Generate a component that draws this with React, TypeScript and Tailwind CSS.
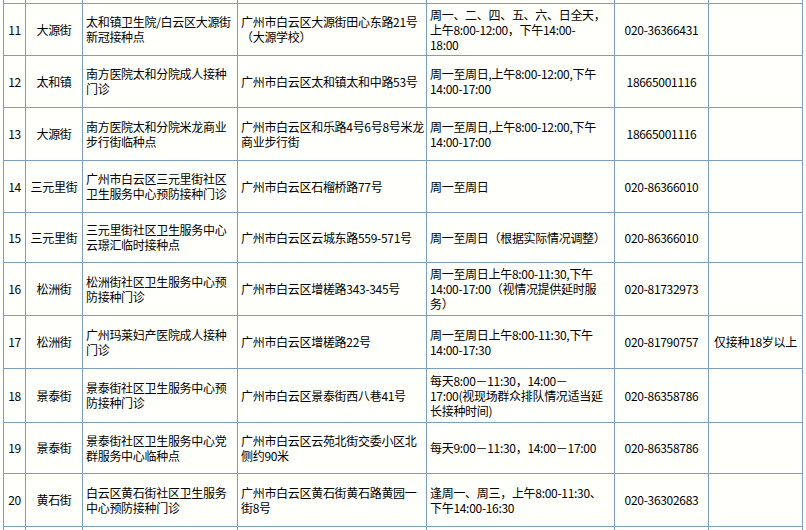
const rows: {
  no: string;
  street: string;
  name: string[];
  addr: string[];
  time: string[];
  phone: string;
  note?: string;
  h: string;
}[] = [
  {
    no: "11",
    street: "大源街",
    name: ["太和镇卫生院/白云区大源街", "新冠接种点"],
    addr: ["广州市白云区大源街田心东路21号", "（大源学校）"],
    time: ["周一、二、四、五、六、日全天，", "上午8:00-12:00，下午14:00-", "18:00"],
    phone: "020-36366431",
    h: "h-[52px]",
  },
  {
    no: "12",
    street: "太和镇",
    name: ["南方医院太和分院成人接种", "门诊"],
    addr: ["广州市白云区太和镇太和中路53号"],
    time: ["周一至周日,上午8:00-12:00,下午", "14:00-17:00"],
    phone: "18665001116",
    h: "h-[52px]",
  },
  {
    no: "13",
    street: "大源街",
    name: ["南方医院太和分院米龙商业", "步行街临种点"],
    addr: ["广州市白云区和乐路4号6号8号米龙", "商业步行街"],
    time: ["周一至周日,上午8:00-12:00,下午", "14:00-17:00"],
    phone: "18665001116",
    h: "h-[53px]",
  },
  {
    no: "14",
    street: "三元里街",
    name: ["广州市白云区三元里街社区", "卫生服务中心预防接种门诊"],
    addr: ["广州市白云区石榴桥路77号"],
    time: ["周一至周日"],
    phone: "020-86366010",
    h: "h-[52px]",
  },
  {
    no: "15",
    street: "三元里街",
    name: ["三元里街社区卫生服务中心", "云璟汇临时接种点"],
    addr: ["广州市白云区云城东路559-571号"],
    time: ["周一至周日（根据实际情况调整）"],
    phone: "020-86366010",
    h: "h-[50px]",
  },
  {
    no: "16",
    street: "松洲街",
    name: ["松洲街社区卫生服务中心预", "防接种门诊"],
    addr: ["广州市白云区增槎路343-345号"],
    time: ["周一至周日上午8:00-11:30,下午", "14:00-17:00（视情况提供延时服", "务）"],
    phone: "020-81732973",
    h: "h-[53px]",
  },
  {
    no: "17",
    street: "松洲街",
    name: ["广州玛莱妇产医院成人接种", "门诊"],
    addr: ["广州市白云区增槎路22号"],
    time: ["周一至周日上午8:00-11:30,下午", "14:00-17:30"],
    phone: "020-81790757",
    note: "仅接种18岁以上",
    h: "h-[53px]",
  },
  {
    no: "18",
    street: "景泰街",
    name: ["景泰街社区卫生服务中心预", "防接种门诊"],
    addr: ["广州市白云区景泰街西八巷41号"],
    time: ["每天8:00－11:30，14:00－", "17:00(视现场群众排队情况适当延", "长接种时间)"],
    phone: "020-86358786",
    h: "h-[54px]",
  },
  {
    no: "19",
    street: "景泰街",
    name: ["景泰街社区卫生服务中心党", "群服务中心临种点"],
    addr: ["广州市白云区云苑北街交委小区北", "侧约90米"],
    time: ["每天9:00－11:30，14:00－17:00"],
    phone: "020-86358786",
    h: "h-[51px]",
  },
  {
    no: "20",
    street: "黄石街",
    name: ["白云区黄石街社区卫生服务", "中心预防接种门诊"],
    addr: ["广州市白云区黄石街黄石路黄园一", "街8号"],
    time: ["逢周一、周三，上午8:00-11:30、", "下午14:00-16:30"],
    phone: "020-36302683",
    h: "h-[53px]",
  },
];

// one text block per cell, lines kept as in the source sheet
function Lines({ lines }: { lines: string[] }) {
  return <div className="whitespace-pre">{lines.join("\n")}</div>;
}

const cell = "border border-[#7d9ec0] p-0 align-middle";
const edge = "border-x border-[#7d9ec0] p-0";

export default function App() {
  return (
    <div
      className="w-[806px] h-[530px] overflow-hidden bg-[#fffffb] text-black text-[12px] leading-[15px] tracking-[-0.3px]"
      style={{ fontFamily: '"Noto Sans CJK SC", "Noto Sans", sans-serif' }}
    >
      <table className="ml-[3px] table-fixed border-collapse w-[800px]">
        <colgroup>
          <col className="w-[22px]" />
          <col className="w-[57px]" />
          <col className="w-[155px]" />
          <col className="w-[189px]" />
          <col className="w-[188px]" />
          <col className="w-[94px]" />
          <col className="w-[94px]" />
        </colgroup>
        <tbody>
          <tr className="h-[3px]">
            {[0, 1, 2, 3, 4, 5, 6].map((i) => (
              <td key={i} className={edge}></td>
            ))}
          </tr>
          {rows.map((r) => (
            <tr key={r.no} className={r.h}>
              <td className={`${cell} text-center`}>{r.no}</td>
              <td className={`${cell} text-center`}>{r.street}</td>
              <td className={`${cell} pl-[3px]`}>
                <Lines lines={r.name} />
              </td>
              <td className={`${cell} pl-[3px]`}>
                <Lines lines={r.addr} />
              </td>
              <td className={`${cell} pl-[3px]`}>
                <Lines lines={r.time} />
              </td>
              <td className={`${cell} text-center`}>{r.phone}</td>
              <td className={`${cell} text-center whitespace-nowrap`}>{r.note ?? ""}</td>
            </tr>
          ))}
          <tr className="h-[8px]">
            {[0, 1, 2, 3, 4, 5, 6].map((i) => (
              <td key={i} className={edge}></td>
            ))}
          </tr>
        </tbody>
      </table>
    </div>
  );
}
